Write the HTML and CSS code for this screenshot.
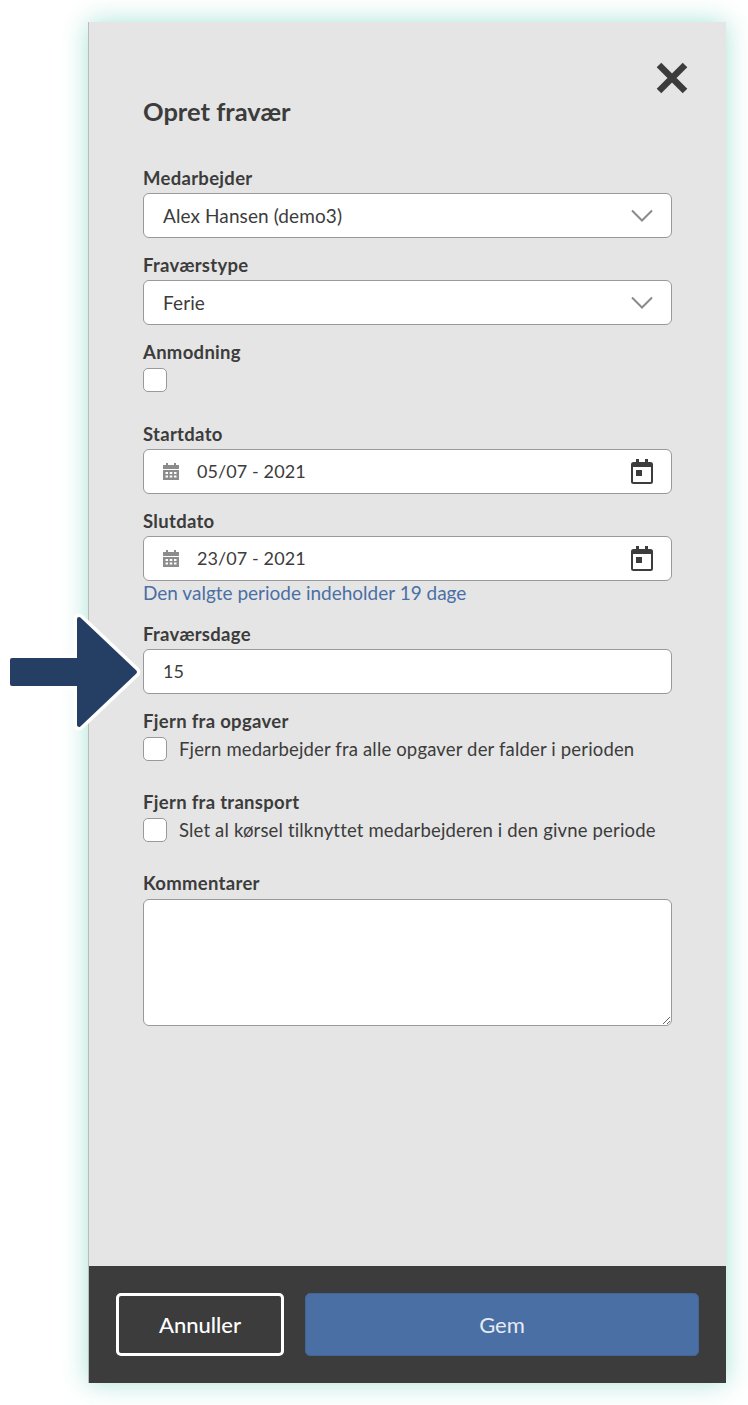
FILE: index.html
```html
<!DOCTYPE html>
<html lang="en">

<head>
    <meta charset="UTF-8">
    <meta name="viewport" content="width=device-width, initial-scale=1.0">
    <title>Opret fravær</title>
    <link rel="stylesheet" href="styles.css">
</head>

<body>
    <div class="panel">
        <div class="content">
            <button class="close" aria-label="Luk">
                <svg width="34" height="34" viewBox="0 0 34 34"><path d="M4 4L30 30M30 4L4 30" fill="none" stroke="#3c3c3c" stroke-width="6.5"/></svg>
            </button>
            <h1>Opret fravær</h1>

            <!-- Medarbejder og type -->
            <div class="field">
                <label>Medarbejder</label>
                <div class="control">
                    <span class="grow">Alex Hansen (demo3)</span>
                    <svg class="chevron" width="22" height="13" viewBox="0 0 22 13"><path d="M1 1.5L11 11.5L21 1.5" fill="none" stroke="#8a8a8a" stroke-width="2"/></svg>
                </div>
            </div>
            <div class="field">
                <label>Fraværstype</label>
                <div class="control">
                    <span class="grow">Ferie</span>
                    <svg class="chevron" width="22" height="13" viewBox="0 0 22 13"><path d="M1 1.5L11 11.5L21 1.5" fill="none" stroke="#8a8a8a" stroke-width="2"/></svg>
                </div>
            </div>
            <div class="field field-request">
                <label>Anmodning</label>
                <input type="checkbox" class="check">
            </div>

            <!-- Datoer -->
            <div class="field">
                <label>Startdato</label>
                <div class="control">
                    <svg class="cal-small" width="16" height="17" viewBox="0 0 16 17"><path d="M3 0h2v2h6V0h2v2h3v4H0V2h3zM0 7h16v10H0zM2.5 9v2H5V9zM6.7 9v2h2.6V9zM11 9v2h2.5V9zM2.5 12.5v2H5v-2zM6.7 12.5v2h2.6v-2zM11 12.5v2h2.5v-2z" fill="#8c8c8c" fill-rule="evenodd"/></svg>
                    <span class="grow date">05/07 - 2021</span>
                    <svg class="cal-big" width="22" height="25" viewBox="0 0 22 25"><path d="M5 0h3v3h6V0h3v3h2.5A2.5 2.5 0 0 1 22 5.5v17a2.5 2.5 0 0 1-2.5 2.5h-17A2.5 2.5 0 0 1 0 22.5v-17A2.5 2.5 0 0 1 2.5 3H5zM2 8v14.5a.5.5 0 0 0 .5.5h17a.5.5 0 0 0 .5-.5V8zM5 11h6v6H5z" fill="#3c3c3c" fill-rule="evenodd"/></svg>
                </div>
            </div>
            <div class="field field-period">
                <label>Slutdato</label>
                <div class="control">
                    <svg class="cal-small" width="16" height="17" viewBox="0 0 16 17"><path d="M3 0h2v2h6V0h2v2h3v4H0V2h3zM0 7h16v10H0zM2.5 9v2H5V9zM6.7 9v2h2.6V9zM11 9v2h2.5V9zM2.5 12.5v2H5v-2zM6.7 12.5v2h2.6v-2zM11 12.5v2h2.5v-2z" fill="#8c8c8c" fill-rule="evenodd"/></svg>
                    <span class="grow date">23/07 - 2021</span>
                    <svg class="cal-big" width="22" height="25" viewBox="0 0 22 25"><path d="M5 0h3v3h6V0h3v3h2.5A2.5 2.5 0 0 1 22 5.5v17a2.5 2.5 0 0 1-2.5 2.5h-17A2.5 2.5 0 0 1 0 22.5v-17A2.5 2.5 0 0 1 2.5 3H5zM2 8v14.5a.5.5 0 0 0 .5.5h17a.5.5 0 0 0 .5-.5V8zM5 11h6v6H5z" fill="#3c3c3c" fill-rule="evenodd"/></svg>
                </div>
                <p class="hint">Den valgte periode indeholder 19 dage</p>
            </div>
            <div class="field">
                <label>Fraværsdage</label>
                <div class="control">
                    <span class="grow date">15</span>
                </div>
            </div>

            <!-- Fjern fra -->
            <div class="field field-option">
                <label>Fjern fra opgaver</label>
                <div class="option">
                    <input type="checkbox" class="check">
                    <span>Fjern medarbejder fra alle opgaver der falder i perioden</span>
                </div>
            </div>
            <div class="field field-option">
                <label>Fjern fra transport</label>
                <div class="option">
                    <input type="checkbox" class="check">
                    <span>Slet al kørsel tilknyttet medarbejderen i den givne periode</span>
                </div>
            </div>

            <div class="field">
                <label>Kommentarer</label>
                <textarea class="comments"></textarea>
            </div>
        </div>

        <div class="footer">
            <button class="btn-cancel">Annuller</button>
            <button class="btn-save">Gem</button>
        </div>
    </div>

    <svg class="arrow" width="136" height="124" viewBox="0 0 136 124">
        <path d="M7 50H74V9L130 62L74 115V74H7Z" fill="#fff" stroke="#fff" stroke-width="11" stroke-linejoin="round"/>
        <path d="M7 50H74V9L130 62L74 115V74H7Z" fill="#243f63" stroke="#243f63" stroke-width="4" stroke-linejoin="round"/>
    </svg>
</body>

</html>
```

FILE: styles.css
```css
* {
    box-sizing: border-box;
}

body {
    font-family: "Lato", Arial, sans-serif;
    margin: 0;
    padding: 22px 22px 22px 88px;
    height: 1405px;
    overflow: hidden;
    position: relative;
    background: white;
    color: #3c3c3c;
}

.panel {
    height: 1361px;
    display: flex;
    flex-direction: column;
    background: #e5e5e5;
    border-left: 1px solid #bcbcbc;
    box-shadow: 0 0 24px rgba(115, 210, 190, 0.62);
}

.content {
    flex: 1;
    position: relative;
    padding: 73px 54px 0;
}

.close {
    position: absolute;
    top: 39px;
    right: 37px;
    padding: 0;
    border: 0;
    background: none;
    line-height: 0;
}

h1 {
    margin: 0 0 41px;
    font-size: 25.5px;
    line-height: 33px;
    font-weight: 700;
}

.field {
    margin-bottom: 18px;
}

.field-request {
    height: 82px;
    margin-bottom: 0;
}

.field-period {
    margin-bottom: 20px;
}

.field-option {
    height: 81px;
    margin-bottom: 0;
}

label {
    display: block;
    height: 24px;
    font-size: 18.5px;
    line-height: 18px;
    font-weight: 700;
    letter-spacing: 0.3px;
}

.control {
    height: 45px;
    display: flex;
    align-items: center;
    padding: 0 18px 1px 19px;
    background: white;
    border: 1px solid #999;
    border-radius: 6px;
    font-size: 19px;
    letter-spacing: 0.1px;
}

.grow {
    flex: 1;
}

.date {
    font-size: 18px;
}

.cal-small {
    margin-right: 18px;
}

.check {
    appearance: none;
    display: block;
    width: 24px;
    height: 24px;
    margin: 1px 0 0;
    flex-shrink: 0;
    background: white;
    border: 1px solid #999;
    border-radius: 5px;
}

.hint {
    margin: 0 0 1px;
    height: 24px;
    font-size: 19px;
    line-height: 24px;
    color: #4a6fa5;
}

.option {
    display: flex;
    align-items: center;
    gap: 12px;
    font-size: 18.5px;
    letter-spacing: 0.16px;
}

.comments {
    display: block;
    width: 100%;
    height: 127px;
    margin-top: 1px;
    background: white;
    border: 1px solid #999;
    border-radius: 6px;
}

.footer {
    height: 117px;
    display: flex;
    gap: 21px;
    padding: 27px;
    background: #3c3c3c;
}

.btn-cancel,
.btn-save {
    height: 63px;
    font-family: inherit;
    font-size: 22px;
    border-radius: 5px;
}

.btn-cancel {
    width: 168px;
    background: #3c3c3c;
    border: 3px solid white;
    color: white;
    font-weight: 500;
}

.btn-save {
    flex: 1;
    background: #4a6fa5;
    border: 1px solid #436595;
    color: #e6ebf2;
}

.arrow {
    position: absolute;
    left: 5px;
    top: 610px;
}
```
